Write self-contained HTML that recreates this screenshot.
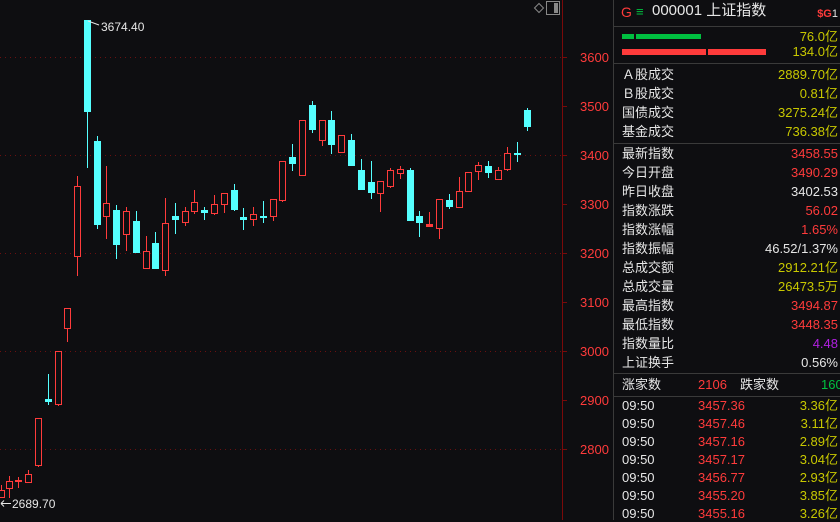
<!DOCTYPE html>
<html><head><meta charset="utf-8"><style>
*{margin:0;padding:0;box-sizing:border-box}
body{width:840px;height:520px;background:#0e0e11;overflow:hidden;position:relative;font-family:"Liberation Sans","Noto Sans CJK SC",sans-serif;color:#e6e6e6}
#chart{position:absolute;left:0;top:0}
#panel{position:absolute;left:613px;top:0;width:227px;height:520px;border-left:1px solid #3a3a3a;background:#0e0e11}
.t{position:absolute;font-size:13px;line-height:16px;white-space:nowrap}
.l{left:8px}
.r{right:2px;text-align:right}
.red{color:#ff3b3b}.yel{color:#c8c800}.grn{color:#00c040}.pur{color:#b020e0}
.hr{position:absolute;left:0;width:227px;height:1px;background:#3a3a3a}
</style></head><body>
<svg id="chart" width="613" height="520" xmlns="http://www.w3.org/2000/svg">
<g stroke="#6a1010" stroke-dasharray="1,4" stroke-width="1">
<line x1="0" y1="57.5" x2="562" y2="57.5"/><line x1="0" y1="155.5" x2="562" y2="155.5"/>
<line x1="0" y1="253.5" x2="562" y2="253.5"/><line x1="0" y1="351.5" x2="562" y2="351.5"/>
<line x1="0" y1="449.5" x2="562" y2="449.5"/>
</g>
<line x1="562.5" y1="0" x2="562.5" y2="520" stroke="#7a0a0a"/>
<g stroke="#7a0a0a"><line x1="562" y1="57.5" x2="567" y2="57.5"/><line x1="562" y1="106.5" x2="567" y2="106.5"/><line x1="562" y1="155.5" x2="567" y2="155.5"/><line x1="562" y1="204.5" x2="567" y2="204.5"/><line x1="562" y1="253.5" x2="567" y2="253.5"/><line x1="562" y1="302.5" x2="567" y2="302.5"/><line x1="562" y1="351.5" x2="567" y2="351.5"/><line x1="562" y1="400.5" x2="567" y2="400.5"/><line x1="562" y1="449.5" x2="567" y2="449.5"/></g>
<g fill="#ff3b3b" font-size="13" font-family="Liberation Sans,sans-serif">
<text x="580" y="62">3600</text><text x="580" y="111">3500</text><text x="580" y="160">3400</text><text x="580" y="209">3300</text><text x="580" y="258">3200</text><text x="580" y="307">3100</text><text x="580" y="356">3000</text><text x="580" y="405">2900</text><text x="580" y="454">2800</text>
</g>
<path d="M534.5 8 L539 3.5 L543.5 8 L539 12.5 Z" fill="none" stroke="#888"/>
<rect x="546.5" y="1.5" width="13" height="13" fill="none" stroke="#888"/><rect x="554" y="3" width="4" height="10" fill="#888"/>
<g id="cs"></g>
<text x="101" y="31" fill="#e6e6e6" font-size="12" font-family="Liberation Sans,sans-serif">3674.40</text>
<path d="M88 21 L99 25" stroke="#e6e6e6" fill="none"/>
<text x="12" y="508" fill="#e6e6e6" font-size="12" font-family="Liberation Sans,sans-serif">2689.70</text>
<path d="M1 503.5 L11 503.5 M1 503.5 L4 500.5 M1 503.5 L4 506.5" stroke="#e6e6e6" fill="none"/>
</svg>
<div id="panel">
<div class="t" style="left:7px;top:4px;font-size:14px;color:#ff3b3b">G</div>
<div class="t" style="left:22px;top:4px;font-size:13px;color:#00c040">≡</div>
<div class="t" style="left:38px;top:3px;font-size:15px;color:#e6e6e6">000001 上证指数</div>
<div class="t r" style="top:6px;font-size:11px"><b class="red">$G</b>1</div>
<div class="hr" style="top:26px"></div>
<div style="position:absolute;left:8px;top:34px;width:12px;height:5px;background:#00c040"></div>
<div style="position:absolute;left:22px;top:34px;width:65px;height:5px;background:#00c040"></div>
<div style="position:absolute;left:8px;top:49px;width:84px;height:6px;background:#ff3b3b"></div>
<div style="position:absolute;left:94px;top:49px;width:58px;height:6px;background:#ff3b3b"></div>
<div class="t r yel" style="top:29px">76.0亿</div>
<div class="t r yel" style="top:44px">134.0亿</div>
<div class="hr" style="top:63px"></div>
<div class="t l" style="top:67px">Ａ股成交</div><div class="t r yel" style="top:67px">2889.70亿</div>
<div class="t l" style="top:86px">Ｂ股成交</div><div class="t r yel" style="top:86px">0.81亿</div>
<div class="t l" style="top:105px">国债成交</div><div class="t r yel" style="top:105px">3275.24亿</div>
<div class="t l" style="top:124px">基金成交</div><div class="t r yel" style="top:124px">736.38亿</div>
<div class="hr" style="top:143px"></div>
<div class="t l" style="top:146px">最新指数</div><div class="t r red" style="top:146px">3458.55</div>
<div class="t l" style="top:165px">今日开盘</div><div class="t r red" style="top:165px">3490.29</div>
<div class="t l" style="top:184px">昨日收盘</div><div class="t r" style="top:184px">3402.53</div>
<div class="t l" style="top:203px">指数涨跌</div><div class="t r red" style="top:203px">56.02</div>
<div class="t l" style="top:222px">指数涨幅</div><div class="t r red" style="top:222px">1.65%</div>
<div class="t l" style="top:241px">指数振幅</div><div class="t r" style="top:241px">46.52/1.37%</div>
<div class="t l" style="top:260px">总成交额</div><div class="t r yel" style="top:260px">2912.21亿</div>
<div class="t l" style="top:279px">总成交量</div><div class="t r yel" style="top:279px">26473.5万</div>
<div class="t l" style="top:298px">最高指数</div><div class="t r red" style="top:298px">3494.87</div>
<div class="t l" style="top:317px">最低指数</div><div class="t r red" style="top:317px">3448.35</div>
<div class="t l" style="top:336px">指数量比</div><div class="t r pur" style="top:336px">4.48</div>
<div class="t l" style="top:355px">上证换手</div><div class="t r" style="top:355px">0.56%</div>
<div class="hr" style="top:373px"></div>
<div class="t l" style="top:377px">涨家数</div><div class="t red" style="left:84px;top:377px">2106</div>
<div class="t" style="left:126px;top:377px">跌家数</div><div class="t grn" style="left:207px;top:377px">160</div>
<div class="hr" style="top:396px"></div>
<div id="rows"></div>
</div>
<script>
var d=[[-2,490,497,485,498,0],[6,481,488,476,498,0],[15,480,481,477,488,2],[25,474,482,470,483,0],[35,418,465,418,467,0],[45,399,401,374,405,1],[55,351,404,351,406,0],[64,308,328,308,342,0],[74,186,256,176,276,0],[84,20,111,20,168,1],[94,141,224,136,229,1],[103,203,216,166,239,0],[113,210,244,205,259,1],[123,211,234,207,251,0],[133,221,252,211,252,1],[143,251,268,236,268,0],[152,243,268,232,268,1],[162,223,270,198,276,0],[172,216,219,203,234,1],[182,211,222,207,226,0],[191,202,211,190,214,0],[201,210,212,207,220,1],[211,204,213,195,215,0],[221,193,204,193,213,0],[231,190,209,184,211,1],[240,217,219,208,230,1],[250,214,219,207,226,0],[260,216,217,201,223,1],[270,199,216,199,221,0],[279,161,200,161,202,0],[289,157,163,144,171,1],[299,120,175,120,176,0],[309,105,129,101,133,1],[319,120,140,120,146,0],[328,120,144,111,154,1],[338,135,152,135,152,0],[348,140,165,134,166,1],[358,170,189,159,189,1],[368,182,192,161,199,1],[377,181,193,181,212,0],[387,170,186,168,188,0],[397,169,173,166,179,0],[407,170,220,168,220,1],[416,216,222,211,237,1],[426,224,226,212,226,2],[436,199,228,199,239,0],[446,200,206,194,209,1],[456,191,207,177,207,0],[465,172,191,172,192,0],[475,165,171,162,180,0],[485,166,172,161,178,1],[495,170,179,167,179,0],[504,153,169,147,171,0],[514,153,154,142,162,1],[524,110,126,108,131,1]];
var s='';
d.forEach(function(c){var x=c[0],col=c[5]==1?'#55ffff':'#ff3b3b',cx=x+3.5;
s+='<line x1="'+cx+'" y1="'+c[3]+'" x2="'+cx+'" y2="'+c[4]+'" stroke="'+col+'"/>';
if(c[5]==0)s+='<rect x="'+(x+0.5)+'" y="'+(c[1]+0.5)+'" width="6" height="'+Math.max(1,c[2]-c[1])+'" fill="#0e0e11" stroke="'+col+'"/>';
else s+='<rect x="'+x+'" y="'+c[1]+'" width="7" height="'+Math.max(2,c[2]-c[1]+1)+'" fill="'+col+'"/>';});
document.getElementById('cs').innerHTML=s;
var r=[['3457.36','3.36亿'],['3457.46','3.11亿'],['3457.16','2.89亿'],['3457.17','3.04亿'],['3456.77','2.93亿'],['3455.20','3.85亿'],['3455.16','3.26亿']];
var h='';r.forEach(function(v,i){var t=398+i*18;
h+='<div class="t l" style="top:'+t+'px">09:50</div><div class="t red" style="left:84px;top:'+t+'px">'+v[0]+'</div><div class="t r yel" style="top:'+t+'px">'+v[1]+'</div>';});
document.getElementById('rows').innerHTML=h;
</script>
</body></html>
